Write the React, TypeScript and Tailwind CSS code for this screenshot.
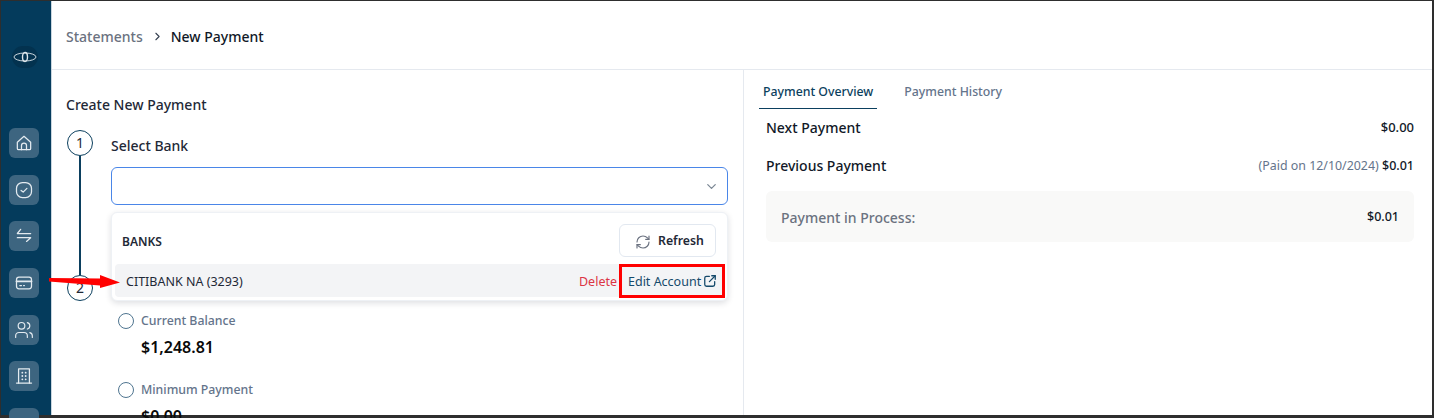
import { ChevronDown, ChevronRight, RefreshCw, Users } from 'lucide-react'
import type { ReactNode } from 'react'

function Glyph({ children }: { children: ReactNode }) {
  return (
    <svg
      width="20"
      height="20"
      viewBox="0 0 24 24"
      fill="none"
      stroke="currentColor"
      strokeWidth="1.5"
      strokeLinecap="round"
      strokeLinejoin="round"
      aria-hidden="true"
    >
      {children}
    </svg>
  )
}

const navIcons: ReactNode[] = [
  <Glyph key="home">
    <path d="M4 11 12 4l8 7v7.500a1.500 1.500 0 0 1-1.500 1.500h-13A1.500 1.500 0 0 1 4 18.500Z" />
    <path d="M9 20v-5a3 3 0 0 1 6 0v5" />
  </Glyph>,
  <Glyph key="check">
    <rect x="3" y="3" width="18" height="18" rx="7" />
    <path d="m8.500 12.500 2.500 2 4.500-4.500" />
  </Glyph>,
  <Glyph key="swap">
    <path d="M8 4 4 9h16" />
    <path d="M4 14h16l-5 4.500" />
  </Glyph>,
  <Glyph key="card">
    <rect x="3" y="5" width="18" height="14" rx="3" />
    <path d="M3 10h18" strokeWidth="2.200" />
    <path d="M7 15h2M11.500 15h1" />
  </Glyph>,
  <Users key="users" size={20} strokeWidth={1.4} aria-hidden="true" />,
  <Glyph key="building">
    <path d="M5.500 20.500V3.500h13v17" />
    <path d="M3 20.500h18" />
    <path d="M10 8h.01M14 8h.01M10 12h.01M14 12h.01M10 16h.01M14 16h.01" strokeWidth="2.200" />
  </Glyph>,
  null,
]

function StepCircle({ n }: { n: number }) {
  return (
    <div className="flex h-[26px] w-[26px] shrink-0 items-center justify-center rounded-full border-[1.5px] border-[#0b3f5e] bg-white text-[14px] leading-none text-[#1f2937]">
      {n}
    </div>
  )
}

function RadioStat({ label, value }: { label: string; value: string }) {
  return (
    <div>
      <div className="flex items-center gap-[7px]">
        <span className="h-4 w-4 rounded-full border-[1.5px] border-[#4f7590]" />
        <span className="text-[12.3px] leading-4 font-medium text-[#64748b]">{label}</span>
      </div>
      <div className="mt-[7px] pl-[23px] text-[16px] leading-[22px] font-semibold text-[#0a0a0a]">{value}</div>
    </div>
  )
}

export default function App() {
  return (
    <div className="flex h-[418px] w-[1434px] flex-col overflow-hidden bg-[#2e2e2e] pt-px pr-[2px] pb-[3px] pl-px font-['Noto_Sans',sans-serif]">
      <div className="flex min-h-0 flex-1 bg-white">
        {/* Sidebar */}
        <aside className="flex w-[51px] shrink-0 flex-col items-start border-r border-[#c9d6df] bg-[#043b5c] pl-[8px]">
          <div className="mt-[45px] ml-[3px] flex h-[22px] w-[26px] shrink-0 items-center justify-center rounded-full bg-[#03324f]">
            <svg width="24" height="14" viewBox="0 0 24 14" fill="none" stroke="#dfe7ec" aria-hidden="true">
              <ellipse cx="12" cy="7" rx="11" ry="4" strokeWidth="0.9" />
              <ellipse cx="12" cy="7" rx="2.500" ry="4.500" strokeWidth="1.400" />
            </svg>
          </div>
          <div className="mt-[60px] flex shrink-0 flex-col gap-[16.7px]">
            {navIcons.map((icon, i) => (
              <div
                key={i}
                className="flex h-[30px] w-[30px] shrink-0 items-center justify-center rounded-[6px] bg-[#3d6580] text-[#e4ebf0]"
              >
                {icon}
              </div>
            ))}
          </div>
        </aside>

        <main className="flex min-w-0 flex-1 flex-col">
          {/* Breadcrumb */}
          <header className="flex h-[69px] shrink-0 items-center gap-[8px] border-b border-[#e5e9ef] pt-[3px] pl-[14px]">
            <span className="text-[14px] font-medium text-[#6b7280]">Statements</span>
            <ChevronRight size={13} className="-mt-px text-[#374151]" aria-hidden="true" />
            <span className="-ml-px text-[14px] font-medium text-[#111827]">New Payment</span>
          </header>

          <div className="flex min-h-0 flex-1">
            {/* Create payment */}
            <section className="relative w-[692px] shrink-0 border-r border-[#e5e9ef] pt-[25px] pr-[15px] pl-[14px]">
              <h2 className="text-[14px] leading-5 font-medium text-[#1f2937]">Create New Payment</h2>
              <div className="mt-[15px] ml-px flex gap-[18px]">
                <div className="flex w-[26px] shrink-0 flex-col items-center">
                  <StepCircle n={1} />
                  <div className="h-[119px] w-[1.5px] bg-[#0b3f5e]" />
                  <StepCircle n={2} />
                </div>
                <div className="min-w-0 flex-1">
                  <div className="mt-[6px] text-[14px] leading-5 font-medium text-[#1f2937]">Select Bank</div>
                  <div className="mt-[11px] flex h-[38px] items-center justify-end rounded-[6px] border border-[#4a86e8] pr-[8px]">
                    <ChevronDown size={15} className="text-[#7b8794]" aria-hidden="true" />
                  </div>
                  <div className="mt-[108px] ml-[7px] flex flex-col gap-[24px]">
                    <RadioStat label="Current Balance" value="$1,248.81" />
                    <RadioStat label="Minimum Payment" value="$0.00" />
                  </div>
                </div>
              </div>

              {/* Banks popover */}
              <div className="absolute top-[142px] left-[59px] h-[89px] w-[617px] rounded-[6px] border border-[#eef1f5] bg-white px-[3px] shadow-[0_2px_6px_rgba(15,23,42,0.14)]">
                <div className="flex h-[51px] items-end justify-between pr-[8px] pl-[7px]">
                  <span className="mb-[12px] text-[12px] leading-5 font-semibold text-[#1f2937]">BANKS</span>
                  <button className="mb-[7px] flex h-[33px] w-[97px] items-center gap-[7px] rounded-[6px] border border-[#e2e8f0] pt-[2px] pl-[15px] text-[12.3px] font-semibold text-[#1f2937]">
                    <RefreshCw size={16} strokeWidth={1.75} className="text-[#6b7280]" aria-hidden="true" />
                    Refresh
                  </button>
                </div>
                <div className="flex h-[33px] items-center justify-between rounded-[4px] bg-[#f3f4f6] pl-[11px]">
                  <span className="pt-[4px] text-[12.5px] text-[#1f2937]">CITIBANK NA (3293)</span>
                  <div className="-mr-px flex h-[34px] items-center gap-[2px] self-start">
                    <span className="pt-[3px] text-[12.5px] text-[#dc3545]">Delete</span>
                    <div className="flex h-[34px] w-[106px] items-center gap-[2px] border-[3px] border-[#ff0000] pt-[2px] pl-[6px] text-[12.5px] text-[#154a6b]">
                      Edit Account
                      <svg
                        width="14"
                        height="14"
                        viewBox="0 0 24 24"
                        fill="none"
                        stroke="currentColor"
                        strokeWidth="2.200"
                        strokeLinecap="round"
                        strokeLinejoin="round"
                        className="-mt-[3px]"
                        aria-hidden="true"
                      >
                        <path d="M11 4H6a3 3 0 0 0-3 3v11a3 3 0 0 0 3 3h11a3 3 0 0 0 3-3v-5" />
                        <path d="M15 3h6v6" />
                        <path d="M21 3 11 13" />
                      </svg>
                    </div>
                  </div>
                </div>
              </div>

              {/* Red annotation arrow */}
              <svg className="absolute top-[201px] left-[-4px]" width="80" height="22" viewBox="0 0 80 22" aria-hidden="true">
                <path d="M1 7 52 7.500V4L72 11.500 52 17V14.500L1 10.500Z" fill="#ff0000" />
              </svg>
            </section>

            {/* Overview */}
            <section className="min-w-0 flex-1 pr-[18px] pl-[15px]">
              <div className="flex h-[39px] items-stretch gap-[27px]">
                <div className="flex items-center border-b-[1.5px] border-[#0b3f5e] px-[4px] pt-[7px] text-[12.3px] font-medium text-[#0b3f5e]">
                  Payment Overview
                </div>
                <div className="flex items-center pt-[5px] text-[12.3px] font-medium text-[#64748b]">Payment History</div>
              </div>
              <div className="mt-[6px] flex h-[24px] items-center justify-between pl-[7px]">
                <span className="text-[14px] font-medium text-[#111827]">Next Payment</span>
                <span className="pt-[2px] text-[13px] font-medium text-[#111827]">$0.00</span>
              </div>
              <div className="mt-[14px] flex h-[24px] items-center justify-between pl-[7px]">
                <span className="text-[14px] font-medium text-[#111827]">Previous Payment</span>
                <span className="pt-[2px] text-[12.4px] text-[#64748b]">
                  (Paid on 12/10/2024) <span className="text-[12.5px] font-medium text-[#111827]">$0.01</span>
                </span>
              </div>
              <div className="mt-[14px] ml-[7px] flex h-[51px] items-center justify-between rounded-[6px] bg-[#f9f9f8] px-[15px]">
                <span className="pt-px text-[14px] font-medium text-[#6b7280]">Payment in Process:</span>
                <span className="pt-[2px] text-[12.5px] font-medium text-[#111827]">$0.01</span>
              </div>
            </section>
          </div>
        </main>
      </div>
    </div>
  )
}
